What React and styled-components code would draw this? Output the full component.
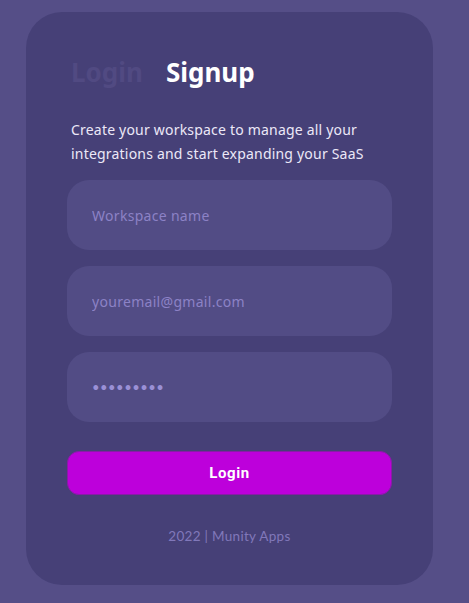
import React from "react";
import styled, { createGlobalStyle } from "styled-components";

const GlobalStyle = createGlobalStyle`
  html, body {
    margin: 0;
    padding: 0;
    background: #554e87;
    font-family: "Noto Sans", Lato, sans-serif;
  }
  * {
    box-sizing: border-box;
  }
`;

function App() {
  return (
    <>
      <GlobalStyle />
      <Page>
        <Card>
          <Tabs>
            <Tab>Login</Tab>
            <Tab $active>Signup</Tab>
          </Tabs>
          <Intro>
            Create your workspace to manage all your integrations and start
            expanding your SaaS
          </Intro>
          <Fields>
            <Input type="text" placeholder="Workspace name" />
            <Input type="email" placeholder="youremail@gmail.com" />
            <Input type="password" defaultValue="123456789" />
          </Fields>
          <SubmitButton type="button">Login</SubmitButton>
          <Footer>2022 | Munity Apps</Footer>
        </Card>
      </Page>
    </>
  );
}

const Page = styled.div`
  min-height: 603px;
  padding: 12px 0 0 26px;
`;

const Card = styled.div`
  width: 407px;
  height: 573px;
  background: #464077;
  border-radius: 36px;
  padding: 44px 41px 0;
  display: flex;
  flex-direction: column;
`;

const Tabs = styled.div`
  display: flex;
  gap: 23px;
  padding-left: 4px;
`;

const Tab = styled.span`
  font-family: "Noto Sans", sans-serif;
  font-size: 26px;
  line-height: 32px;
  font-weight: 700;
  color: ${(p) => (p.$active ? "#ffffff" : "#514a82")};
`;

const Intro = styled.p`
  margin: 30px 0 0;
  padding-left: 4px;
  font-size: 14px;
  line-height: 24px;
  color: #ece8f7;
  letter-spacing: 0.2px;
`;

const Fields = styled.div`
  margin-top: 14px;
  display: flex;
  flex-direction: column;
  gap: 16px;
`;

const Input = styled.input`
  width: 100%;
  height: 70px;
  border: none;
  outline: none;
  border-radius: 22px;
  background: #524c85;
  padding: 0 25px;
  font-family: "Noto Sans", Lato, sans-serif;
  font-size: 14px;
  color: #9188cf;
  letter-spacing: 0.3px;

  &::placeholder {
    color: #8c82c6;
  }

  &[type="password"] {
    font-family: Lato, sans-serif;
    font-size: 13px;
    letter-spacing: 0.5px;
    color: #9a90d6;
  }
`;

const SubmitButton = styled.button`
  margin-top: 29px;
  height: 44px;
  width: 100%;
  border-radius: 12px;
  border: 1px solid #8a1aa8;
  background: #bd00db;
  color: #ffffff;
  font-family: Roboto, "Noto Sans", sans-serif;
  font-size: 15px;
  font-weight: 700;
  letter-spacing: 0.6px;
  cursor: pointer;
`;

const Footer = styled.div`
  margin-top: 31px;
  text-align: center;
  font-family: Lato, "Noto Sans", sans-serif;
  font-size: 13.5px;
  line-height: 20px;
  color: #8178ba;
  letter-spacing: 0.3px;
`;

export default App;
